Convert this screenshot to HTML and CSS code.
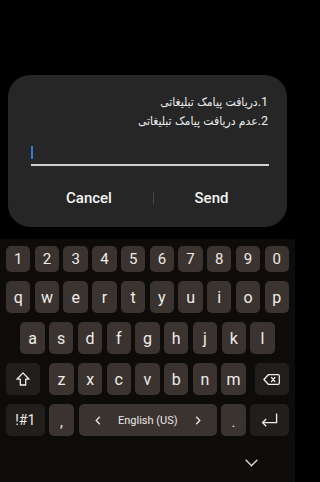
FILE: index.html
```html
<!DOCTYPE html>
<html lang="fa">
<head>
<meta charset="utf-8">
<title>Dialog</title>
<link rel="stylesheet" href="styles.css">
</head>
<body>
<div class="screen">
  <div class="dialog">
    <div class="msg" dir="rtl">
      <div><span class="num">1.</span><span class="fa">دریافت پیامک تبلیغاتی</span></div>
      <div><span class="num">2.</span><span class="fa">عدم دریافت پیامک تبلیغاتی</span></div>
    </div>
    <div class="field"><span class="cursor"></span></div>
    <div class="actions">
      <div class="btn btn-cancel">Cancel</div>
      <div class="sep"></div>
      <div class="btn btn-send">Send</div>
    </div>
  </div>

  <div class="keyboard">
    <div class="row row-num">
      <div class="key">1</div><div class="key">2</div><div class="key">3</div><div class="key">4</div><div class="key">5</div>
      <div class="key">6</div><div class="key">7</div><div class="key">8</div><div class="key">9</div><div class="key">0</div>
    </div>
    <div class="row">
      <div class="key">q</div><div class="key">w</div><div class="key">e</div><div class="key">r</div><div class="key">t</div>
      <div class="key">y</div><div class="key">u</div><div class="key">i</div><div class="key">o</div><div class="key">p</div>
    </div>
    <div class="row row-mid">
      <div class="key">a</div><div class="key">s</div><div class="key">d</div><div class="key">f</div><div class="key">g</div>
      <div class="key">h</div><div class="key">j</div><div class="key">k</div><div class="key">l</div>
    </div>
    <div class="row">
      <div class="key fn shift">
        <svg width="14" height="14" viewBox="0 0 14 14"><path d="M7 0.9 L0.9 7.2 H4.3 V13 H9.7 V7.2 H13.1 Z" fill="none" stroke="#f2efed" stroke-width="1.3" stroke-linejoin="round"/></svg>
      </div>
      <div class="key">z</div><div class="key">x</div><div class="key">c</div><div class="key">v</div><div class="key">b</div>
      <div class="key">n</div><div class="key">m</div>
      <div class="key fn back">
        <svg width="17" height="11" viewBox="0 0 17 11"><path d="M5.3 0.7 H15 a1.3 1.3 0 0 1 1.3 1.3 V9 a1.3 1.3 0 0 1 -1.3 1.3 H5.3 L0.9 5.5 Z" fill="none" stroke="#f2efed" stroke-width="1.3" stroke-linejoin="round"/><path d="M8.6 3.6 L11.8 7.4 M11.8 3.6 L8.6 7.4" stroke="#f2efed" stroke-width="1.4" stroke-linecap="round"/></svg>
      </div>
    </div>
    <div class="row">
      <div class="key fn sym">!#1</div>
      <div class="key punct">,</div>
      <div class="key space">
        <svg width="6" height="9" viewBox="0 0 6 9"><path d="M4.8 0.8 L1.2 4.5 L4.8 8.2" fill="none" stroke="#e9e5e2" stroke-width="1.3"/></svg>
        <span class="lang">English (US)</span>
        <svg width="6" height="9" viewBox="0 0 6 9"><path d="M1.2 0.8 L4.8 4.5 L1.2 8.2" fill="none" stroke="#e9e5e2" stroke-width="1.3"/></svg>
      </div>
      <div class="key punct">.</div>
      <div class="key fn enter">
        <svg width="17" height="14" viewBox="0 0 17 14"><path d="M15.6 0.5 V9.6 H1.6" fill="none" stroke="#f2efed" stroke-width="1.3"/><path d="M5.2 6 L1.6 9.6 L5.2 13.2" fill="none" stroke="#f2efed" stroke-width="1.3"/></svg>
      </div>
    </div>
    <div class="navbar">
      <svg width="13" height="8" viewBox="0 0 13 8"><path d="M0.7 0.8 L6.5 6.8 L12.3 0.8" fill="none" stroke="#dcdcdc" stroke-width="1.3"/></svg>
    </div>
  </div>
</div>
</body>
</html>
```

FILE: styles.css
```css
html, body {
  margin: 0;
  padding: 0;
  background: #000;
}

body {
  width: 295px;
  height: 482px;
  overflow: hidden;
  font-family: Roboto, "Noto Sans", sans-serif;
}

.screen {
  display: flex;
  flex-direction: column;
  height: 482px;
}

.dialog {
  margin: 75px 8px 0;
  height: 152px;
  box-sizing: border-box;
  background: #262626;
  border-radius: 22px;
  padding: 18px 18px 0 23px;
}

.msg {
  text-align: right;
  font-size: 12px;
  line-height: 17.5px;
  height: 35px;
  color: #ececec;
  padding-right: 1px;
}

.num {
  font-family: Roboto, sans-serif;
  font-size: 12.5px;
}

.fa {
  font-family: "DejaVu Sans Condensed", "DejaVu Sans", sans-serif;
  font-stretch: condensed;
  font-size: 12px;
}

.field {
  margin-top: 13px;
  height: 25px;
  box-sizing: border-box;
  border-bottom: 2px solid #cfcfcf;
  padding-top: 5px;
}

.cursor {
  display: block;
  width: 2px;
  height: 13px;
  background: #2f7bd6;
}

.actions {
  display: flex;
  align-items: center;
  height: 32px;
  margin: 16px 0 0 -6px;
}

.btn {
  font-size: 15px;
  font-weight: 500;
  color: #f4f4f4;
  text-align: center;
}

.btn-cancel {
  width: 128px;
}

.sep {
  width: 1px;
  height: 12px;
  background: #474747;
}

.btn-send {
  flex: 1;
}

.keyboard {
  margin-top: 12px;
  flex: 1;
  background: #0e0c0b;
  padding-top: 7px;
  display: flex;
  flex-direction: column;
  gap: 9px;
}

.row {
  display: flex;
  gap: 4.4px;
  padding: 0 6px;
  height: 32px;
}

.row-num {
  height: 26px;
}

.row-mid {
  padding: 0 20.3px;
}

.key {
  flex: 1;
  display: flex;
  align-items: center;
  justify-content: center;
  background: #3a3330;
  border-radius: 5px;
  color: #efebe9;
  font-size: 16px;
}

.row-num .key {
  font-size: 15px;
}

.fn {
  background: #221e1c;
}

.shift {
  flex: 0 0 34px;
  margin-right: 4.9px;
}

.back {
  flex: 0 0 34px;
  margin-left: 4.9px;
}

.sym {
  flex: 0 0 38.5px;
  font-size: 14px;
  margin-right: 0.5px;
}

.punct {
  flex: 0 0 24.3px;
  align-items: flex-end;
  line-height: 1;
  font-size: 15px;
  padding-bottom: 6px;
  box-sizing: border-box;
}

.space {
  flex: 1;
  justify-content: space-between;
  padding: 0 16px 0 16px;
  margin-left: 0.5px;
}

.lang {
  font-size: 11px;
  color: #ece8e5;
}

.enter {
  flex: 0 0 39px;
}

.navbar {
  display: flex;
  justify-content: flex-end;
  padding: 14px 37px 0 0;
}
```
